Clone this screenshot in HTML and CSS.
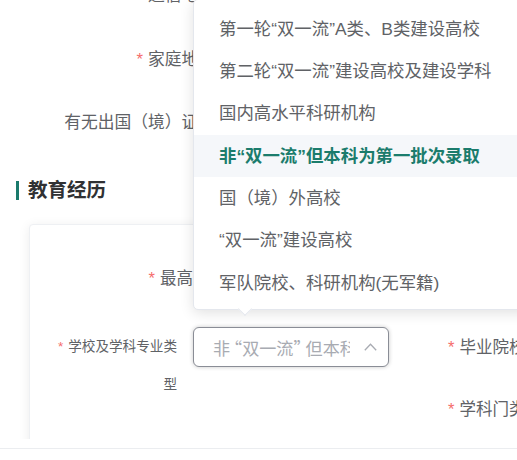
FILE: index.html
```html
<!DOCTYPE html>
<html lang="zh-CN">
<head>
<meta charset="utf-8">
<title>教育经历</title>
<link rel="stylesheet" href="styles.css">
</head>
<body>
<div class="viewport">
  <div class="content">
    <section class="basic">
      <div class="row"><label class="lbl req">通信地址</label></div>
      <div class="row"><label class="lbl req">家庭地址</label></div>
      <div class="row"><label class="lbl">有无出国（境）证件</label></div>
    </section>

    <h2 class="section-title">教育经历</h2>

    <div class="card">
      <div class="card-row">
        <label class="lbl-wide req">最高学历</label>
      </div>
      <div class="card-row">
        <div class="col-left">
          <label class="lbl-small req">学校及学科专业类型</label>
          <div class="select">
            <span class="select-text">非<span class="q-open">“</span>双一流<span class="q-close">”</span>但本科为第一批次录取</span>
            <svg class="chev" width="13" height="8" viewBox="0 0 13 8"><polyline points="0.8,7.2 6.5,1.2 12.2,7.2" fill="none" stroke="#a8abb2" stroke-width="1.3"/></svg>
          </div>
        </div>
        <div class="col-right"><label class="lbl-right req">毕业院校</label></div>
      </div>
      <div class="card-row">
        <div class="col-left"></div>
        <div class="col-right"><label class="lbl-right req">学科门类</label></div>
      </div>
    </div>
  </div>
</div>
<div class="footer"></div>

<div class="popover">
  <ul class="options">
    <li class="option">第一轮“双一流”A类、B类建设高校</li>
    <li class="option">第二轮“双一流”建设高校及建设学科</li>
    <li class="option">国内高水平科研机构</li>
    <li class="option selected">非“双一流”但本科为第一批次录取</li>
    <li class="option">国（境）外高校</li>
    <li class="option">“双一流”建设高校</li>
    <li class="option">军队院校、科研机构(无军籍)</li>
  </ul>
</div>
</body>
</html>
```
FILE: styles.css
```css
* { box-sizing: border-box; }

html, body {
  margin: 0;
  padding: 0;
  width: 517px;
  height: 460px;
  overflow: hidden;
  background: #ffffff;
  font-family: "Liberation Sans", "Noto Sans CJK SC", sans-serif;
  color: #606266;
}

.viewport {
  position: relative;
  width: 517px;
  height: 439px;
  overflow: hidden;
}

.content {
  margin-top: -37px;
}

/* top form rows */
.basic .row {
  height: 63.5px;
  display: flex;
  align-items: center;
}

.basic .row:first-child { height: 65px; }

.lbl {
  width: 215px;
  text-align: right;
  font-size: 16.75px;
  line-height: 24px;
  white-space: nowrap;
}

.req::before {
  content: "*";
  color: #f56c6c;
  margin-right: 5px;
}

/* section title */
.section-title {
  margin: 25px 0 0 0;
  height: 20px;
  display: flex;
  align-items: center;
  font-size: 19.5px;
  line-height: 20px;
  font-weight: 700;
  color: #303133;
}

.section-title::before {
  content: "";
  display: block;
  width: 3px;
  height: 19px;
  margin-left: 16px;
  margin-right: 9px;
  background: #1a7a6c;
}

/* card */
.card {
  margin: 24px 0 0 29px;
  width: 620px;
  height: 400px;
  padding: 33px 0 0 26px;
  background: #fff;
  border: 1px solid #eef0f3;
  border-radius: 4px;
  box-shadow: 0 2px 12px rgba(0, 0, 0, 0.08);
}

.card-row {
  height: 40px;
  display: flex;
  align-items: flex-start;
}

.card-row + .card-row { margin-top: 29px; }
.card-row + .card-row + .card-row { margin-top: 22px; }

.lbl-wide {
  width: 170px;
  text-align: right;
  font-size: 16.5px;
  line-height: 40px;
  white-space: nowrap;
}

.col-left {
  width: 333px;
  height: 40px;
  display: flex;
  flex-shrink: 0;
}

.lbl-small {
  width: 121px;
  flex-shrink: 0;
  padding-top: 1px;
  font-size: 13.6px;
  line-height: 38px;
  text-align: right;
}

.select {
  margin-left: 16px;
  width: 196px;
  height: 40px;
  flex-shrink: 0;
  display: flex;
  align-items: center;
  padding: 0 11px 0 19px;
  border: 1px solid #8a8d96;
  border-radius: 6px;
  background: #fff;
  box-shadow: 0 0 4px rgba(0, 0, 0, 0.22);
}

.select-text {
  width: 137px;
  flex-shrink: 0;
  overflow: hidden;
  white-space: nowrap;
  font-family: "Noto Sans CJK SC", sans-serif;
  font-feature-settings: "fwid";
  font-size: 17.1px;
  color: #a8abb2;
}

/* full-width quotes, tightened on their empty side */
.q-open { margin-left: -5px; }
.q-close { margin-right: -5px; }

.chev {
  margin-left: 14px;
  flex-shrink: 0;
}

.col-right {
  margin-left: 59px;
}

.lbl-right {
  font-size: 16.5px;
  line-height: 40px;
  white-space: nowrap;
}

/* footer line */
.footer {
  margin-top: 9px;
  border-top: 1px solid #ebedf0;
}

/* dropdown popover */
.popover {
  position: absolute;
  left: 193px;
  top: -1px;
  width: 340px;
  background: #fff;
  border: 1px solid #e4e7ed;
  border-radius: 5px;
  box-shadow: 0 3px 14px rgba(0, 0, 0, 0.12);
  z-index: 10;
}

.popover::after {
  content: "";
  position: absolute;
  left: 46px;
  bottom: -5px;
  width: 9px;
  height: 9px;
  background: #fff;
  border-right: 1px solid #e4e7ed;
  border-bottom: 1px solid #e4e7ed;
  transform: rotate(45deg);
}

.options {
  list-style: none;
  margin: 0;
  padding: 7.8px 0 5px 0;
}

.option {
  height: 42.33px;
  line-height: 42.33px;
  padding-left: 25px;
  font-size: 17.4px;
  color: #606266;
  white-space: nowrap;
}

.option.selected {
  background: #f5f7fa;
  color: #1b7c6c;
  font-weight: 700;
}
```
